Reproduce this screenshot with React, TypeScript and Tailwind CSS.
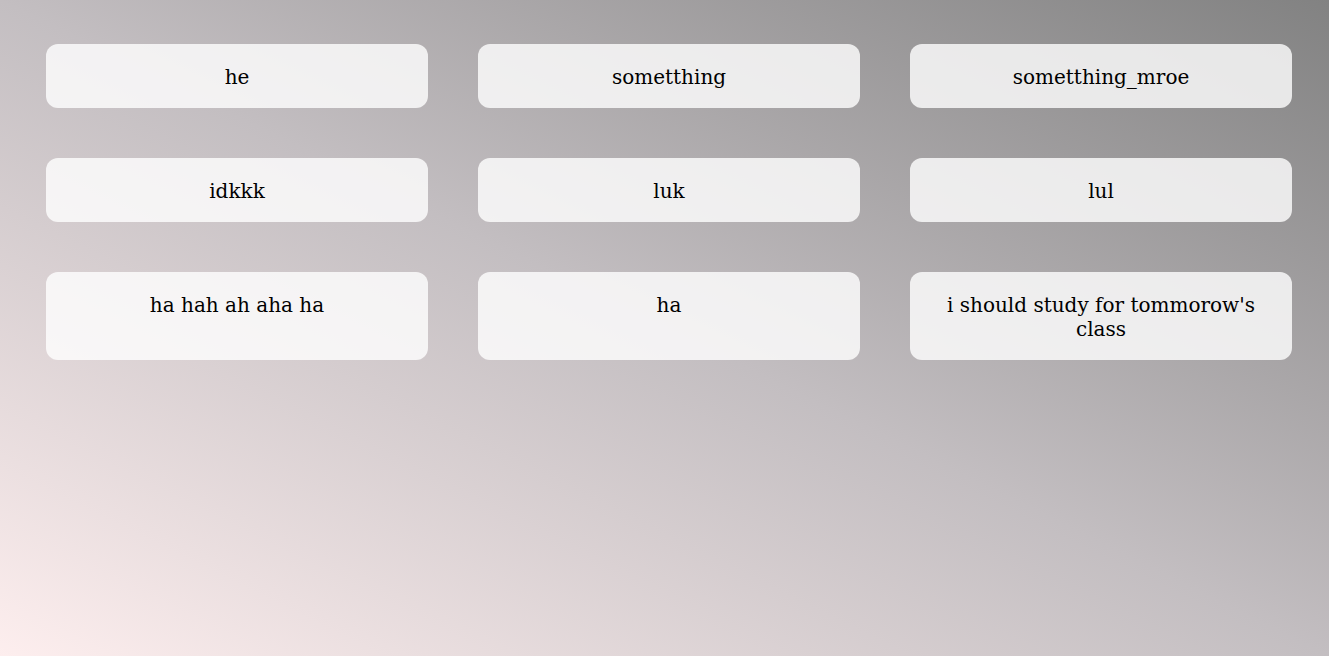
import React from "react";

const App = () => {
  const notes = [
    "he",
    "sometthing",
    "sometthing_mroe",
    "idkkk",
    "luk",
    "lul",
    "ha hah ah aha ha",
    "ha",
    "i should study for tommorow's class",
  ];

  return (
    <div className="min-h-screen w-full bg-gradient-to-tr from-[#fdeeee] via-[#c3bec1] to-[#828282] pt-[44px] pl-[46px] pr-[37px]">
      <div className="grid grid-cols-3 gap-x-[50px] gap-y-[50px]">
        {notes.map((note, index) => (
          <div
            key={index}
            className="rounded-xl bg-white/80 px-4 pt-[21px] pb-[19px] text-center text-[20px] leading-6 text-black font-['DejaVu_Serif',serif]"
          >
            {note}
          </div>
        ))}
      </div>
    </div>
  );
};

export default App;
